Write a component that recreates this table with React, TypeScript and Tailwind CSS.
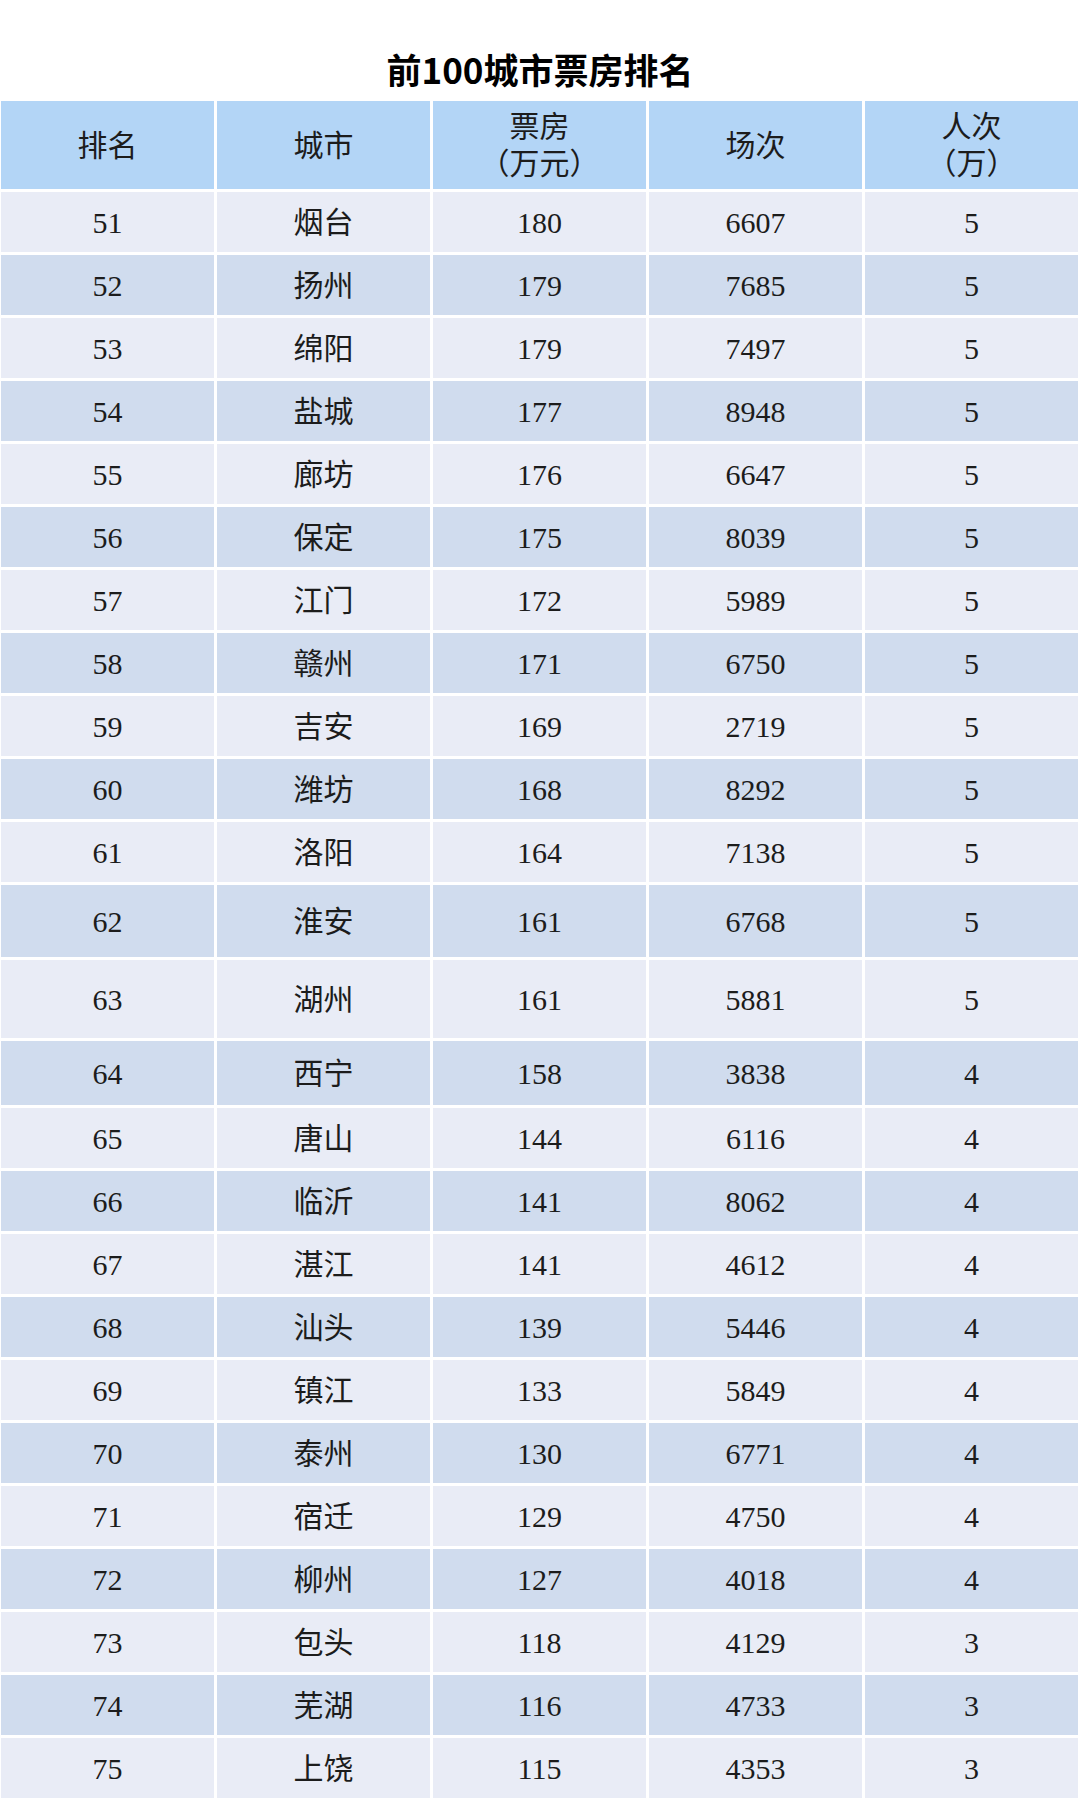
import React from "react";

type Row = { r: string; c: string; b: string; s: string; p: string; h: string };

const rows: Row[] = [
  { r: "51", c: "烟台", b: "180", s: "6607", p: "5", h: "h-[60px]" },
  { r: "52", c: "扬州", b: "179", s: "7685", p: "5", h: "h-[60px]" },
  { r: "53", c: "绵阳", b: "179", s: "7497", p: "5", h: "h-[60px]" },
  { r: "54", c: "盐城", b: "177", s: "8948", p: "5", h: "h-[60px]" },
  { r: "55", c: "廊坊", b: "176", s: "6647", p: "5", h: "h-[60px]" },
  { r: "56", c: "保定", b: "175", s: "8039", p: "5", h: "h-[60px]" },
  { r: "57", c: "江门", b: "172", s: "5989", p: "5", h: "h-[60px]" },
  { r: "58", c: "赣州", b: "171", s: "6750", p: "5", h: "h-[60px]" },
  { r: "59", c: "吉安", b: "169", s: "2719", p: "5", h: "h-[60px]" },
  { r: "60", c: "潍坊", b: "168", s: "8292", p: "5", h: "h-[60px]" },
  { r: "61", c: "洛阳", b: "164", s: "7138", p: "5", h: "h-[60px]" },
  { r: "62", c: "淮安", b: "161", s: "6768", p: "5", h: "h-[72px]" },
  { r: "63", c: "湖州", b: "161", s: "5881", p: "5", h: "h-[78px]" },
  { r: "64", c: "西宁", b: "158", s: "3838", p: "4", h: "h-[64px]" },
  { r: "65", c: "唐山", b: "144", s: "6116", p: "4", h: "h-[60px]" },
  { r: "66", c: "临沂", b: "141", s: "8062", p: "4", h: "h-[60px]" },
  { r: "67", c: "湛江", b: "141", s: "4612", p: "4", h: "h-[60px]" },
  { r: "68", c: "汕头", b: "139", s: "5446", p: "4", h: "h-[60px]" },
  { r: "69", c: "镇江", b: "133", s: "5849", p: "4", h: "h-[60px]" },
  { r: "70", c: "泰州", b: "130", s: "6771", p: "4", h: "h-[60px]" },
  { r: "71", c: "宿迁", b: "129", s: "4750", p: "4", h: "h-[60px]" },
  { r: "72", c: "柳州", b: "127", s: "4018", p: "4", h: "h-[60px]" },
  { r: "73", c: "包头", b: "118", s: "4129", p: "3", h: "h-[60px]" },
  { r: "74", c: "芜湖", b: "116", s: "4733", p: "3", h: "h-[60px]" },
  { r: "75", c: "上饶", b: "115", s: "4353", p: "3", h: "h-[60px]" },
];

function HeaderCell({ children }: { children: React.ReactNode }) {
  return (
    <div className="bg-[#b3d5f6] flex flex-col items-center justify-center text-center leading-[37px]">
      {children}
    </div>
  );
}

export default function App() {
  return (
    <div className="w-[1080px] h-[1800px] bg-white overflow-hidden font-['Liberation_Serif','Noto_Sans_CJK_SC',serif] text-[30px] text-[#1c1c1c]">
      <div className="h-[101px] pt-[51px] text-center font-['Noto_Sans_CJK_SC',sans-serif] font-bold text-[35px] leading-[36px] text-black">
        前100城市票房排名
      </div>
      <div className="flex flex-col gap-[3px] pl-[1px] pr-[2px]">
        <div className="grid grid-cols-5 gap-[3px] h-[88px]">
          <HeaderCell>排名</HeaderCell>
          <HeaderCell>城市</HeaderCell>
          <HeaderCell>
            <span>票房</span>
            <span>（万元）</span>
          </HeaderCell>
          <HeaderCell>场次</HeaderCell>
          <HeaderCell>
            <span>人次</span>
            <span>（万）</span>
          </HeaderCell>
        </div>
        {rows.map((row, i) => {
          const bg = i % 2 === 0 ? "bg-[#e9ecf6]" : "bg-[#d0dcee]";
          return (
            <div key={row.r} className={`grid grid-cols-5 gap-[3px] ${row.h}`}>
              {[row.r, row.c, row.b, row.s, row.p].map((v, j) => (
                <div key={j} className={`${bg} flex items-center justify-center`}>
                  {v}
                </div>
              ))}
            </div>
          );
        })}
      </div>
    </div>
  );
}
